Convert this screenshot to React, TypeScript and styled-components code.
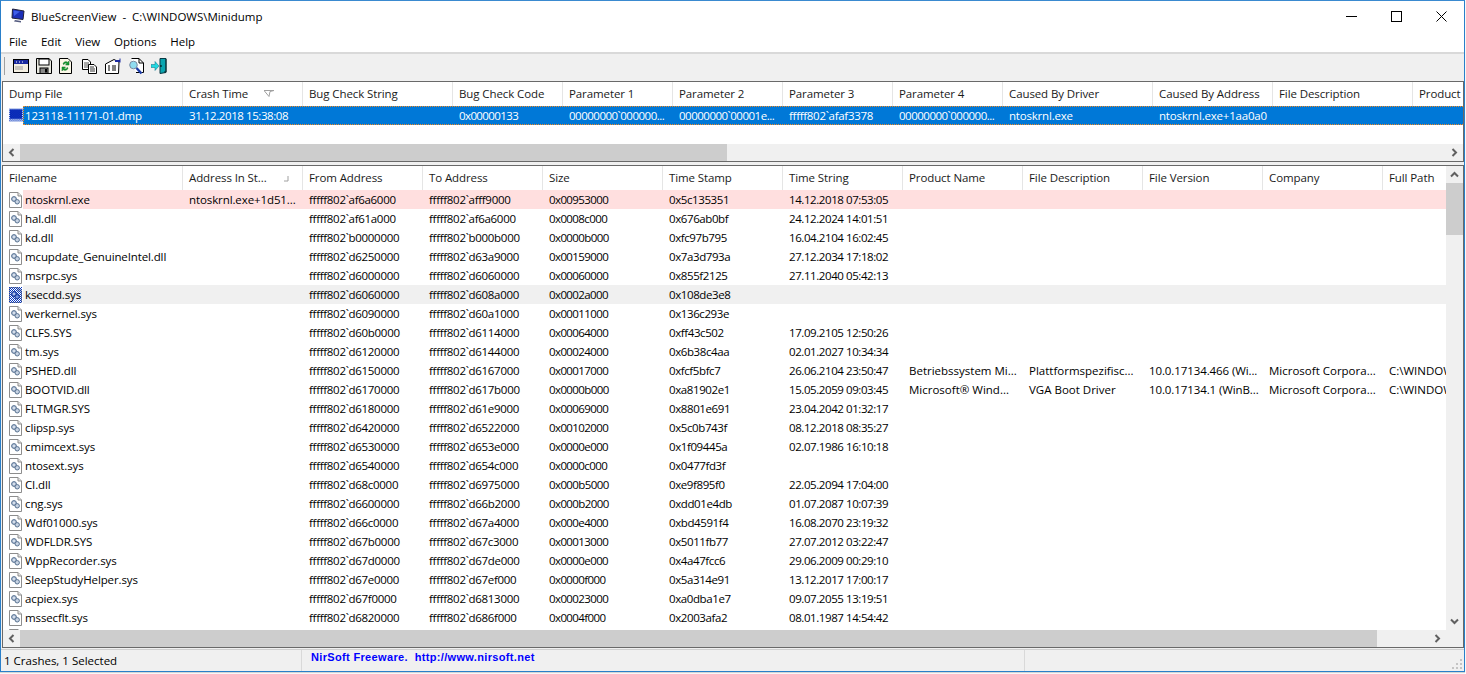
import React from "react";
import styled, { createGlobalStyle } from "styled-components";

const Global = createGlobalStyle`
  html, body { margin: 0; padding: 0; background: #fff; overflow: hidden; }
  #root { width: 1466px; height: 674px; }
`;
const FONT = `"Open Sans", "Noto Sans", "Liberation Sans", sans-serif`;

const Win = styled.div`
  width: 1465px; height: 672px; box-sizing: border-box;
  border: 1px solid #2a7fc9; border-top-color: #3a8ad0;
  background: #f0f0f0; display: flex; flex-direction: column;
  font: 11.5px ${FONT}; color: #000; overflow: hidden;
  box-shadow: 0 1px 1px #d4d4d4;
`;
const Title = styled.div`
  height: 30px; background: #fff; display: flex; align-items: center; padding-left: 9px;
  font-size: 11.5px; flex: none;
`;
const TitleText = styled.span` margin-left: 5px; white-space: pre; `;
const Caps = styled.div` margin-left: auto; display: flex; height: 30px; `;
const Cap = styled.div` width: 45px; display: flex; align-items: center; justify-content: center; `;
const Menu = styled.div`
  height: 21px; background: #fff; display: flex; align-items: center; padding-left: 8px; gap: 13.75px;
  border-bottom: 2px solid #d9d9d9; flex: none;
`;
const MenuItem = styled.span``;
const Toolbar = styled.div`
  height: 27px; box-sizing: border-box; flex: none; display: flex; align-items: center; padding: 0 0 3px 3px; background: #f0f0f0;
`;
const Grip = styled.div` width: 1px; height: 18px; background: #a0a0a0; margin-right: 8px; `;
const ToolIcon = styled.span` width: 23px; height: 18px; display: flex; align-items: center; `;
const Pane = styled.div<{ $h: number }>`
  height: ${p => p.$h}px; flex: none; margin: 0 0 0 1px; box-sizing: border-box;
  border: 1px solid #696969; background: #fff; display: flex; flex-direction: column; overflow: hidden;
`;
const Body = styled.div` flex: 1; min-height: 0; display: flex; overflow: hidden; `;
const ListArea = styled.div` flex: 1; min-width: 0; overflow: hidden; `;
const Header = styled.div<{ $cols: string; $h: number }>`
  display: grid; grid-template-columns: ${p => p.$cols}; width: 1700px; height: ${p => p.$h}px;
  background: #fff;
`;
const HCell = styled.div`
  padding: 0 0 2px 6px; box-sizing: border-box; border-right: 1px solid #e5e5e5; display: flex; align-items: center;
  white-space: nowrap; overflow: hidden; position: relative; color: #1a1a1a; letter-spacing: -0.1px;
`;
const SortMark = styled.svg<{ $r: number; $t: number }>` position: absolute; right: ${p => p.$r}px; top: ${p => p.$t}px; `;
const Row = styled.div`
  display: flex; height: 19px; align-items: center;
  width: 1700px;
`;
const RowIcon = styled.span` width: 20px; flex: none; height: 19px; padding-left: 6px; box-sizing: border-box; display: flex; align-items: center; `;
const RowCells = styled.div<{ $cols: string; $bg?: string; $sel?: boolean }>`
  display: grid; grid-template-columns: ${p => p.$cols}; flex: none; height: 19px; align-items: center;
  background: ${p => p.$bg || "transparent"};
  ${p => p.$sel ? `color:#fff; background:#0078d7; outline: 1px dotted #f08a24; outline-offset: -1px;` : ""}
`;
const Clip = styled.div<{ $w: number }>` width: ${p => p.$w}px; overflow: hidden; flex: none; `;
const Cell = styled.div<{ $ls?: number; $first?: boolean }>`
  padding-left: ${p => p.$first ? 2 : 6}px; white-space: nowrap; overflow: hidden;
  letter-spacing: ${p => p.$ls ?? 0}px;
`;
const HBar = styled.div`
  height: 17px; flex: none; background: #f0f0f0; display: flex; align-items: stretch;
`;
const Arrow = styled.div` width: 17px; flex: none; display: flex; align-items: center; justify-content: center; `;
const Thumb = styled.div<{ $w: number }>` width: ${p => p.$w}px; background: #cdcdcd; flex: none; `;
const Spacer = styled.div` flex: 1; `;
const VBar = styled.div` width: 17px; flex: none; background: #f0f0f0; display: flex; flex-direction: column; `;
const VArrow = styled.div` height: 17px; display: flex; align-items: center; justify-content: center; flex: none; `;
const VThumb = styled.div` height: 52px; background: #cdcdcd; flex: none; `;
const Gap = styled.div` height: 3px; flex: none; `;
const Status = styled.div`
  flex: 1; display: flex; align-items: center; position: relative; border-top: 1px solid #d0d0d0; margin-top: 1px;
  background: #f0f0f0;
`;
const SP = styled.div<{ $w: number }>`
  width: ${p => p.$w}px; flex: none; height: 100%; box-sizing: border-box; display: flex; align-items: center; padding-left: 3px;
  border-right: 1px solid #d9d9d9;
`;
const Link = styled.span`
  font: bold 11px "Liberation Sans", Arial, sans-serif; color: #0000ff; padding-left: 6px; margin-top: -7px; white-space: pre;
  letter-spacing: 0.34px;
`;
const SizeGrip = styled.svg` position: absolute; right: 1px; bottom: 1px; `;

const Monitor = () => (
  <svg width="16" height="16" viewBox="0 0 16 16">
    <path d="M2.5 1 L14 3 L13 11.5 L2 10 Z" fill="#1c2fb8" stroke="#20203a" strokeWidth="1"/>
    <path d="M3.5 2.5 L10 3.5 L4 8 Z" fill="#3f5fe8"/>
    <path d="M5 12 L11 13 L11 14.5 L4 13.5 Z" fill="#555c80"/>
  </svg>
);
const Dither = ({ id }: { id: string }) => (
  <defs>
    <pattern id={id} width="2" height="2" patternUnits="userSpaceOnUse">
      <rect width="1" height="1" fill="#0a3ac0"/>
      <rect x="1" y="1" width="1" height="1" fill="#0a3ac0"/>
    </pattern>
  </defs>
);
const PageGear = ({ blue }: { blue?: boolean }) => (
  <svg width="13" height="16" viewBox="0 0 13 16">
    {blue && <Dither id="dith" />}
    <path d="M.5 .5 H9 L12.5 4 V15.5 H.5 Z" fill="#fff" stroke="#8d8d8d"/>
    <path d="M9 .5 V4 H12.5" fill="#e4e4e4" stroke="#8d8d8d"/>
    {blue && <rect x="0" y="0" width="13" height="16" fill="url(#dith)"/>}
    <circle cx="5" cy="7" r="2.4" fill={blue ? "#6f8fd8" : "#b7c6dc"} stroke={blue ? "#0a2a90" : "#56708f"} strokeWidth="1"/>
    <circle cx="8.2" cy="9.8" r="2.2" fill={blue ? "#6f8fd8" : "#c8d4e4"} stroke={blue ? "#0a2a90" : "#56708f"} strokeWidth="1"/>
    <circle cx="5" cy="7" r=".8" fill="#fff"/>
  </svg>
);
const IconWin = () => (
  <svg width="16" height="14" viewBox="0 0 16 14">
    <rect x=".5" y=".5" width="15" height="13" fill="#f4efe2" stroke="#000"/>
    <rect x="1" y="1" width="14" height="4" fill="#1b2aa0"/>
    <path d="M3 3h1M6 3h1M9 3h1" stroke="#fff"/>
    <path d="M2 8h8M2 10h8" stroke="#9a9a9a"/>
  </svg>
);
const IconSave = () => (
  <svg width="16" height="16" viewBox="0 0 16 16">
    <path d="M.5 .5H13L15.5 3V15.5H.5Z" fill="#e8e8e0" stroke="#000"/>
    <rect x="3" y="1" width="10" height="6" fill="#fff" stroke="#000"/>
    <rect x="4" y="10" width="8" height="5.5" fill="#888" stroke="#000"/>
    <rect x="9" y="11" width="2" height="3.5" fill="#000"/>
  </svg>
);
const IconRefresh = () => (
  <svg width="13" height="16" viewBox="0 0 13 16">
    <path d="M.5 .5H9L12.5 4V15.5H.5Z" fill="#fbf8e8" stroke="#000"/>
    <path d="M4 6a3 3 0 0 1 5-1.5L10 3v4H6.5L8 5.5A2 2 0 0 0 5 6.5Z" fill="#12a030" stroke="#0b6a20" strokeWidth=".5"/>
    <path d="M9 10a3 3 0 0 1-5 1.5L3 13V9h3.5L5 10.5a2 2 0 0 0 3-1Z" fill="#12a030" stroke="#0b6a20" strokeWidth=".5"/>
  </svg>
);
const IconCopy = () => (
  <svg width="16" height="15" viewBox="0 0 16 15">
    <path d="M.5 .5H6L8.5 3V10.5H.5Z" fill="#fff" stroke="#000"/>
    <path d="M2 4h5M2 6h5M2 8h5" stroke="#555"/>
    <path d="M6.5 5.5H12L14.5 8V14.5H6.5Z" fill="#fff" stroke="#000"/>
    <path d="M8 8h4M8 10h5M8 12h5" stroke="#333"/>
  </svg>
);
const IconProps = () => (
  <svg width="16" height="16" viewBox="0 0 16 16">
    <path d="M.5 6L9 1.5 14 4 13.5 15.5H.5Z" fill="#fff" stroke="#000"/>
    <path d="M3 8h2M7 8h4M3 10h2M7 10h4M3 12h2M7 12h4" stroke="#000"/>
    <path d="M10 3h5" stroke="#1b2aa0" strokeWidth="2"/>
    <path d="M15 .5v4" stroke="#1b2aa0"/>
  </svg>
);
const IconFind = () => (
  <svg width="16" height="17" viewBox="0 0 16 17">
    <path d="M3.5 .5H11L15.5 5V14.5H8" fill="#fff" stroke="#000"/>
    <path d="M11 .5V5H15.5" fill="none" stroke="#000"/>
    <circle cx="5.5" cy="7" r="3.8" fill="#8fdcf0" stroke="#7a8aa0"/>
    <path d="M8.5 10l5 5.5" stroke="#1b3aa8" strokeWidth="2.4"/>
  </svg>
);
const IconExit = () => (
  <svg width="16" height="16" viewBox="0 0 16 16">
    <path d="M9 .5h6v14l-6 1Z" fill="#0aa5b0" stroke="#0a3a44"/>
    <path d="M15 1v13h-2" stroke="#0a2a30" fill="none"/>
    <path d="M0 6.5h4v-3l4 4.5-4 4.5v-3H0Z" fill="#22d8e0" stroke="#0a6a80" strokeWidth=".5"/>
    <rect x="9.5" y="7" width="1" height="2" fill="#000"/>
  </svg>
);
const ChevL = ({ c = "#606060" }) => <svg width="7" height="9" viewBox="0 0 7 9"><path d="M5.5 1L2 4.5l3.5 3.5" fill="none" stroke={c} strokeWidth="2"/></svg>;
const ChevR = ({ c = "#606060" }) => <svg width="7" height="9" viewBox="0 0 7 9"><path d="M1.5 1L5 4.5 1.5 8" fill="none" stroke={c} strokeWidth="2"/></svg>;
const ChevU = () => <svg width="9" height="7" viewBox="0 0 9 7"><path d="M1 5.5L4.5 2 8 5.5" fill="none" stroke="#606060" strokeWidth="2"/></svg>;
const ChevD = () => <svg width="9" height="7" viewBox="0 0 9 7"><path d="M1 1.5L4.5 5 8 1.5" fill="none" stroke="#606060" strokeWidth="2"/></svg>;

const topCols = [180, 120, 150, 110, 110, 110, 110, 110, 150, 120, 140, 100];
const topHead = ["Dump File", "Crash Time", "Bug Check String", "Bug Check Code", "Parameter 1", "Parameter 2", "Parameter 3", "Parameter 4", "Caused By Driver", "Caused By Address", "File Description", "Product Name"];
const botCols = [180, 120, 120, 120, 120, 120, 120, 120, 120, 120, 120, 120];
const botHead = ["Filename", "Address In St...", "From Address", "To Address", "Size", "Time Stamp", "Time String", "Product Name", "File Description", "File Version", "Company", "Full Path"];
const tpl = (c: number[]) => c.map(x => x + "px").join(" ");
const rowTpl = (c: number[]) => [c[0] - 20, ...c.slice(1)].map(x => x + "px").join(" ");

type R = string[];
const rows: R[] = [
  ["ntoskrnl.exe", "ntoskrnl.exe+1d51...", "af6a6000", "afff9000", "00953000", "0x5c135351", "14.12.2018 07:53:05"],
  ["hal.dll", "", "af61a000", "af6a6000", "0008c000", "0x676ab0bf", "24.12.2024 14:01:51"],
  ["kd.dll", "", "b0000000", "b000b000", "0000b000", "0xfc97b795", "16.04.2104 16:02:45"],
  ["mcupdate_GenuineIntel.dll", "", "d6250000", "d63a9000", "00159000", "0x7a3d793a", "27.12.2034 17:18:02"],
  ["msrpc.sys", "", "d6000000", "d6060000", "00060000", "0x855f2125", "27.11.2040 05:42:13"],
  ["ksecdd.sys", "", "d6060000", "d608a000", "0002a000", "0x108de3e8", ""],
  ["werkernel.sys", "", "d6090000", "d60a1000", "00011000", "0x136c293e", ""],
  ["CLFS.SYS", "", "d60b0000", "d6114000", "00064000", "0xff43c502", "17.09.2105 12:50:26"],
  ["tm.sys", "", "d6120000", "d6144000", "00024000", "0x6b38c4aa", "02.01.2027 10:34:34"],
  ["PSHED.dll", "", "d6150000", "d6167000", "00017000", "0xfcf5bfc7", "26.06.2104 23:50:47", "Betriebssystem Mi...", "Plattformspezifisc...", "10.0.17134.466 (Wi...", "Microsoft Corpora...", "C:\\WINDOW"],
  ["BOOTVID.dll", "", "d6170000", "d617b000", "0000b000", "0xa81902e1", "15.05.2059 09:03:45", "Microsoft\u00ae Wind...", "VGA Boot Driver", "10.0.17134.1 (WinB...", "Microsoft Corpora...", "C:\\WINDOW"],
  ["FLTMGR.SYS", "", "d6180000", "d61e9000", "00069000", "0x8801e691", "23.04.2042 01:32:17"],
  ["clipsp.sys", "", "d6420000", "d6522000", "00102000", "0x5c0b743f", "08.12.2018 08:35:27"],
  ["cmimcext.sys", "", "d6530000", "d653e000", "0000e000", "0x1f09445a", "02.07.1986 16:10:18"],
  ["ntosext.sys", "", "d6540000", "d654c000", "0000c000", "0x0477fd3f", ""],
  ["CI.dll", "", "d68c0000", "d6975000", "000b5000", "0xe9f895f0", "22.05.2094 17:04:00"],
  ["cng.sys", "", "d6600000", "d66b2000", "000b2000", "0xdd01e4db", "01.07.2087 10:07:39"],
  ["Wdf01000.sys", "", "d66c0000", "d67a4000", "000e4000", "0xbd4591f4", "16.08.2070 23:19:32"],
  ["WDFLDR.SYS", "", "d67b0000", "d67c3000", "00013000", "0x5011fb77", "27.07.2012 03:22:47"],
  ["WppRecorder.sys", "", "d67d0000", "d67de000", "0000e000", "0x4a47fcc6", "29.06.2009 00:29:10"],
  ["SleepStudyHelper.sys", "", "d67e0000", "d67ef000", "0000f000", "0x5a314e91", "13.12.2017 17:00:17"],
  ["acpiex.sys", "", "d67f0000", "d6813000", "00023000", "0xa0dba1e7", "09.07.2055 13:19:51"],
  ["mssecflt.sys", "", "d6820000", "d686f000", "0004f000", "0x2003afa2", "08.01.1987 14:54:42"],
  ["", "", "", "", "", "", ""],
];
const pre = "fffff802`";
const top = ["123118-11171-01.dmp", "31.12.2018 15:38:08", "", "0x00000133", "00000000`000000...", "00000000`00001e...", "fffff802`afaf3378", "00000000`000000...", "ntoskrnl.exe", "ntoskrnl.exe+1aa0a0"];
const topLs = [-0.2, -0.42, 0, -0.6, -0.5, -0.5, -0.3, -0.5, -0.2, -0.2];
const botLs = [-0.12, -0.1, -0.3, -0.3, -0.6, -0.4, -0.42, 0, 0, -0.1, 0, 0];

export default function App() {
  return (
    <Win>
      <Global />
      <Title>
        <Monitor />
        <TitleText>BlueScreenView  -  C:\WINDOWS\Minidump</TitleText>
        <Caps>
          <Cap><svg width="11" height="11"><path d="M0 5.5h11" stroke="#000"/></svg></Cap>
          <Cap><svg width="11" height="11"><rect x=".5" y=".5" width="10" height="10" fill="none" stroke="#000"/></svg></Cap>
          <Cap><svg width="11" height="11"><path d="M.5 .5l10 10M10.5 .5l-10 10" stroke="#000"/></svg></Cap>
        </Caps>
      </Title>
      <Menu>
        {["File", "Edit", "View", "Options", "Help"].map(m => <MenuItem key={m}>{m}</MenuItem>)}
      </Menu>
      <Toolbar>
        <Grip />
        <ToolIcon><IconWin /></ToolIcon>
        <ToolIcon><IconSave /></ToolIcon>
        <ToolIcon><IconRefresh /></ToolIcon>
        <ToolIcon><IconCopy /></ToolIcon>
        <ToolIcon><IconProps /></ToolIcon>
        <ToolIcon><IconFind /></ToolIcon>
        <ToolIcon><IconExit /></ToolIcon>
      </Toolbar>
      <Pane $h={81}>
        <ListArea>
          <Header $cols={tpl(topCols)} $h={24}>
            {topHead.map((h, i) => (
              <HCell key={h}>{h}
                {i === 1 && <SortMark $r={28} $t={8} width="10" height="7" viewBox="0 0 10 7"><path d="M0 .5h10L6 1.5 5 6.5Z" fill="none" stroke="#a0a0a0"/></SortMark>}
              </HCell>
            ))}
          </Header>
          <Row>
            <RowIcon>
              <svg width="15" height="15" viewBox="0 0 15 15">
                <Dither id="d1" />
                <rect x="1" y="1" width="13" height="10" fill="#0a1fb0"/>
                <rect x="0" y="0" width="15" height="14" fill="url(#d1)"/>
              </svg>
            </RowIcon>
            <RowCells $cols={rowTpl(topCols)} $sel>
              {top.map((c, i) => <Cell key={i} $first={i === 0} $ls={topLs[i]}>{c}</Cell>)}
              <Cell /><Cell />
            </RowCells>
          </Row>
        </ListArea>
        <HBar>
          <Arrow><ChevL /></Arrow>
          <Thumb $w={707} />
          <Spacer />
          <Arrow><ChevR /></Arrow>
        </HBar>
      </Pane>
      <Gap />
      <Pane $h={483}>
        <Body>
          <ListArea>
            <Header $cols={tpl(botCols)} $h={24}>
              {botHead.map((h, i) => (
                <HCell key={h}>{h}
                  {i === 1 && <SortMark $r={13} $t={10} width="6" height="6" viewBox="0 0 6 6"><path d="M5 0v5H1" fill="none" stroke="#a0a0a0"/></SortMark>}
                </HCell>
              ))}
            </Header>
            {rows.map((r, i) => {
              const cells = [r[0], r[1], r[2] ? pre + r[2] : "", r[3] ? pre + r[3] : "", r[4] ? "0x" + r[4] : "", r[5], r[6], r[7] || "", r[8] || "", r[9] || "", r[10] || "", r[11] || ""];
              return (
                <Row key={i}>
                  <RowIcon><PageGear blue={r[0] === "ksecdd.sys"} /></RowIcon>
                  <Clip $w={1424}>
                    <RowCells $cols={rowTpl(botCols)} $bg={i === 0 ? "#ffdfdf" : i === 5 ? "#f0f0f0" : undefined}>
                      {cells.map((c, j) => <Cell key={j} $first={j === 0} $ls={botLs[j]}>{c}</Cell>)}
                    </RowCells>
                  </Clip>
                </Row>
              );
            })}
          </ListArea>
          <VBar>
            <VArrow><ChevU /></VArrow>
            <VThumb />
            <Spacer />
            <VArrow><ChevD /></VArrow>
          </VBar>
        </Body>
        <HBar>
          <Arrow><ChevL /></Arrow>
          <Thumb $w={1357} />
          <Spacer />
          <Arrow><ChevR /></Arrow>
          <Arrow />
        </HBar>
      </Pane>
      <Status>
        <SP $w={301}>1 Crashes, 1 Selected</SP>
        <SP $w={723}><Link>NirSoft Freeware.  http://www.nirsoft.net</Link></SP>
        <SizeGrip width="12" height="12" viewBox="0 0 12 12">
          <path d="M9 1h2v2H9zM5 5h2v2H5zM9 5h2v2H9zM1 9h2v2H1zM5 9h2v2H5zM9 9h2v2H9z" fill="#c4c4c4"/>
        </SizeGrip>
      </Status>
    </Win>
  );
}
